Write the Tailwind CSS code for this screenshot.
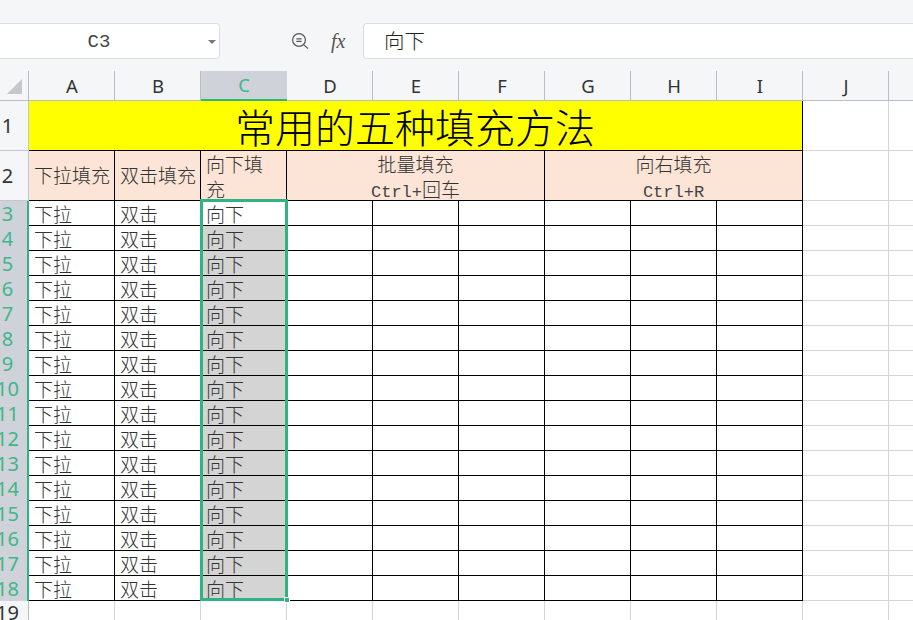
<!DOCTYPE html>
<html lang="zh-CN">
<head>
    <meta charset="UTF-8">
    <title>常用的五种填充方法</title>
    <script src="https://cdn.jsdelivr.net/npm/@tailwindcss/browser@4"></script>
</head>
<body class="h-[620px] w-[913px] overflow-hidden bg-white font-['Noto_Sans','Noto_Sans_CJK_SC',sans-serif]">
    <!-- formula bar -->
    <div class="flex h-[71px] items-start bg-[#f5f6f8] pt-[23px]">
        <div class="relative flex h-[36px] w-[220px] items-center justify-center rounded-r border border-l-0 border-[#dcdee3] bg-white pr-[21px] pt-[2px] font-['Liberation_Mono',monospace] text-[19px] text-[#444]">
            C3
            <div class="absolute right-[3px] top-[16px] h-0 w-0 border-x-[4px] border-t-[4px] border-x-transparent border-t-[#777]"></div>
        </div>
        <svg class="ml-[71px] mt-[9px] h-[18px] w-[18px]" viewBox="0 0 18 18" fill="none" stroke="#555" stroke-width="1.2">
            <circle cx="8" cy="8" r="6.4"></circle>
            <path d="M5.4 6.8h5.2M5.4 9.4h5.2M12.6 12.6l4.4 4"></path>
        </svg>
        <div class="ml-[22px] mt-[6px] w-[17px] font-['Liberation_Serif',serif] text-[20px] italic leading-[24px] text-[#555]">fx</div>
        <div class="ml-[15px] flex h-[36px] flex-1 items-center rounded-tl rounded-bl border border-r-0 border-[#dcdee3] bg-white pb-[2px] pl-[20px] font-['Noto_Sans_CJK_SC',sans-serif] text-[20.5px] font-light text-[#222]">向下</div>
    </div>

    <!-- sheet -->
    <div id="sheet" class="relative grid grid-cols-[29px_repeat(10,86px)_24px] grid-rows-[30px_50px_50px_repeat(17,25px)] font-['Noto_Sans_CJK_SC',sans-serif]">
        <!-- column headers -->
        <div class="relative border-b border-r border-[#b9bdc6] bg-[#f5f6f8]">
            <div class="absolute left-[7px] top-[8px] h-0 w-0 border-b-[15px] border-l-[15px] border-b-[#c4c7cc] border-l-transparent"></div>
        </div>
        <div class="flex items-center justify-center border-b border-r border-[#b9bdc6] bg-[#f5f6f8] pl-[1px] font-['Noto_Sans',sans-serif] text-[18.5px] text-[#333]">A</div>
        <div class="flex items-center justify-center border-b border-r border-[#b9bdc6] bg-[#f5f6f8] pl-[1px] font-['Noto_Sans',sans-serif] text-[18.5px] text-[#333]">B</div>
        <div class="flex items-center justify-center border-b-2 border-[#2fb57f] bg-[#cfd2d8] font-['Noto_Sans',sans-serif] text-[18.5px] text-[#3fb68b]">C</div>
        <div class="flex items-center justify-center border-b border-r border-[#b9bdc6] bg-[#f5f6f8] pl-[1px] font-['Noto_Sans',sans-serif] text-[18.5px] text-[#333]">D</div>
        <div class="flex items-center justify-center border-b border-r border-[#b9bdc6] bg-[#f5f6f8] pl-[1px] font-['Noto_Sans',sans-serif] text-[18.5px] text-[#333]">E</div>
        <div class="flex items-center justify-center border-b border-r border-[#b9bdc6] bg-[#f5f6f8] pl-[1px] font-['Noto_Sans',sans-serif] text-[18.5px] text-[#333]">F</div>
        <div class="flex items-center justify-center border-b border-r border-[#b9bdc6] bg-[#f5f6f8] pl-[1px] font-['Noto_Sans',sans-serif] text-[18.5px] text-[#333]">G</div>
        <div class="flex items-center justify-center border-b border-r border-[#b9bdc6] bg-[#f5f6f8] pl-[1px] font-['Noto_Sans',sans-serif] text-[18.5px] text-[#333]">H</div>
        <div class="flex items-center justify-center border-b border-r border-[#b9bdc6] bg-[#f5f6f8] pl-[1px] font-['Noto_Sans',sans-serif] text-[18.5px] text-[#333]">I</div>
        <div class="flex items-center justify-center border-b border-r border-[#b9bdc6] bg-[#f5f6f8] pl-[1px] font-['Noto_Sans',sans-serif] text-[18.5px] text-[#333]">J</div>
        <div class="border-b border-[#b9bdc6] bg-[#f5f6f8]"></div>

        <!-- row 1 -->
        <div class="flex items-center justify-center border-b border-r border-[#c3c6d0] bg-[#f5f6f8] pr-[13px] font-['Noto_Sans',sans-serif] text-[20px] text-[#333]">1</div>
        <div class="col-span-9 flex items-center justify-center border-b border-r border-black bg-[#ffff00] pr-[1px] text-[40px] font-light leading-none text-black">常用的五种填充方法</div>
        <div class="border-b border-r border-[#d3d5de]"></div>
        <div class="border-b border-[#d3d5de]"></div>

        <!-- row 2 -->
        <div class="flex items-center justify-center border-b border-r border-[#c3c6d0] bg-[#f5f6f8] pr-[13px] font-['Noto_Sans',sans-serif] text-[20px] text-[#333]">2</div>
        <div class="flex items-center whitespace-nowrap border-b border-r border-black bg-[#fce4d6] pl-[5px] text-[19px] font-light text-[#333]">下拉填充</div>
        <div class="flex items-center whitespace-nowrap border-b border-r border-black bg-[#fce4d6] pl-[5px] text-[19px] font-light text-[#333]">双击填充</div>
        <div class="overflow-hidden border-b border-r border-black bg-[#fce4d6] pl-[5px] text-[19px] font-light leading-[25px] text-[#333]">向下填<br>充</div>
        <div class="col-span-3 border-b border-r border-black bg-[#fce4d6] text-center text-[19px] font-light leading-[25px] text-[#333]">批量填充<br><span class="font-['Liberation_Mono',monospace] text-[17px] text-[#444]">Ctrl+</span>回车</div>
        <div class="col-span-3 border-b border-r border-black bg-[#fce4d6] text-center text-[19px] font-light leading-[25px] text-[#333]">向右填充<br><span class="font-['Liberation_Mono',monospace] text-[17px] text-[#444]">Ctrl+R</span></div>
        <div class="border-b border-r border-[#d3d5de]"></div>
        <div class="border-b border-[#d3d5de]"></div>

        <!-- selection box on C3:C18 -->
        <div class="pointer-events-none absolute left-[200px] top-[128px] h-[402px] w-[88px] border-[3px] border-[#2fb383]"></div>
        <div class="absolute left-[284px] top-[526px] h-[6px] w-[6px] border border-white bg-[#2fb383]"></div>
    </div>

    <script>
        const sheet = document.getElementById('sheet');
        const marker = sheet.querySelector('.pointer-events-none');
        const headCls = "flex items-center justify-center border-b border-r border-[#b9bdc6] bg-[#f5f6f8] pr-[13px] font-['Noto_Sans',sans-serif] text-[20px] text-[#333]";
        const headSelCls = "flex items-center justify-center border-r-2 border-[#2fb57f] bg-[#cfd2d8] pr-[12px] font-['Noto_Sans',sans-serif] text-[20px] text-[#3fb68b]";
        const cellCls = "flex items-end border-b border-r border-black pl-[5px] text-[19px] font-light leading-[22px] text-[#333]";
        const greyCls = "flex items-end border-b border-r border-black bg-[#d4d4d4] pl-[5px] text-[19px] font-light leading-[22px] text-[#333]";
        const freeCls = "border-b border-r border-[#d3d5de]";
        const lastCls = "border-b border-[#d3d5de]";

        function add(cls, text) {
            const d = document.createElement('div');
            d.className = cls;
            if (text) d.textContent = text;
            sheet.insertBefore(d, marker);
        }

        for (let r = 3; r <= 19; r++) {
            const on = r <= 18;
            add(on ? headSelCls : headCls, String(r));
            for (let c = 0; c < 9; c++) {
                if (!on) { add(freeCls); continue; }
                if (c === 0) add(cellCls, '下拉');
                else if (c === 1) add(cellCls, '双击');
                else if (c === 2) add(r === 3 ? cellCls : greyCls, '向下');
                else add(cellCls);
            }
            add(freeCls);
            add(lastCls);
        }
    </script>
</body>
</html>
